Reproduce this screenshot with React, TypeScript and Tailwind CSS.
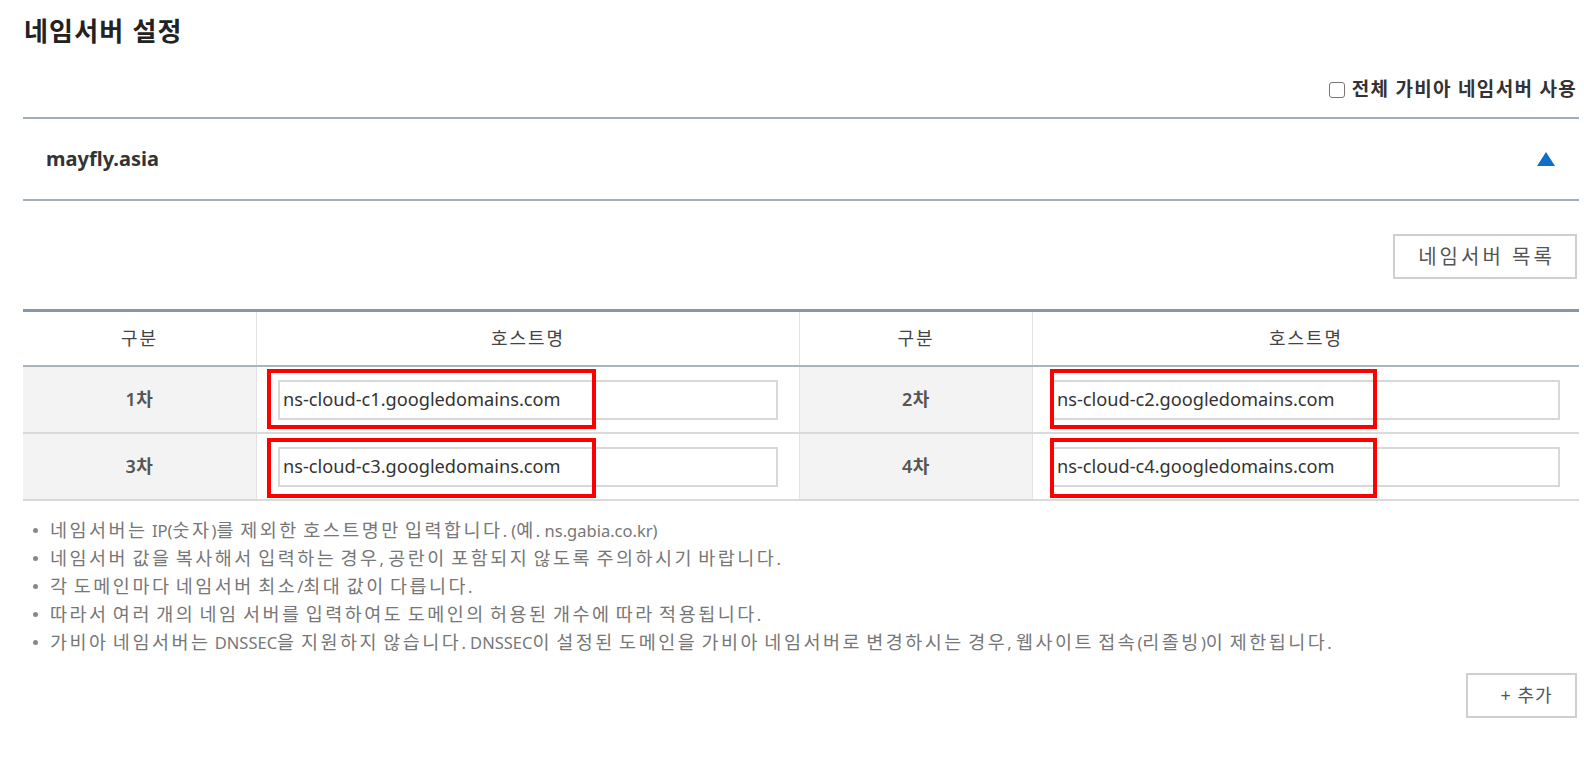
import React from "react";

const FONT = { fontFamily: '"Noto Sans", "Noto Sans CJK KR", sans-serif' };

function NoteText({ text }: { text: string }) {
  const parts = text.split(/([\uAC00-\uD7A3]+)/);
  return (
    <span>
      {parts.map((p, i) =>
        /[\uAC00-\uD7A3]/.test(p) ? (
          <span key={i} className="text-[18.5px] tracking-[2.5px]">
            {p}
          </span>
        ) : (
          <span key={i} className="text-[16.5px]">
            {p}
          </span>
        )
      )}
    </span>
  );
}

function Row({ a, b, c, d, first }: { a: string; b: string; c: string; d: string; first: boolean }) {
  return (
    <div className="flex h-[67px] border-b-2 border-[#dadada]">
      <div className="w-[234px] shrink-0 bg-[#f3f3f3] border-r border-[#e3e3e3] flex items-center justify-center text-[18px] tracking-[0.5px] font-semibold text-[#555]">
        {a}
      </div>
      <div className="relative w-[543px] shrink-0 border-r border-[#e3e3e3] flex items-center px-[21px]">
        <div className="w-full h-[40px] border-2 border-[#d8d8d8] flex items-center pl-[3px] text-[18.2px] text-[#333]">
          {b}
        </div>
        <div className={`absolute left-[10px] w-[329px] h-[60px] border-[4px] border-[#ff0000] ${first ? "top-[2px]" : "top-[4px]"}`} />
      </div>
      <div className="w-[233px] shrink-0 bg-[#f3f3f3] border-r border-[#e3e3e3] flex items-center justify-center text-[18px] tracking-[0.5px] font-semibold text-[#555]">
        {c}
      </div>
      <div className="relative flex-1 flex items-center pl-[19px] pr-[19px]">
        <div className="w-full h-[40px] border-2 border-[#d8d8d8] flex items-center pl-[3px] text-[18.2px] text-[#333]">
          {d}
        </div>
        <div className={`absolute left-[17px] w-[327px] h-[60px] border-[4px] border-[#ff0000] ${first ? "top-[2px]" : "top-[4px]"}`} />
      </div>
    </div>
  );
}

const notes = [
  "네임서버는 IP(숫자)를 제외한 호스트명만 입력합니다. (예. ns.gabia.co.kr)",
  "네임서버 값을 복사해서 입력하는 경우, 공란이 포함되지 않도록 주의하시기 바랍니다.",
  "각 도메인마다 네임서버 최소/최대 값이 다릅니다.",
  "따라서 여러 개의 네임 서버를 입력하여도 도메인의 허용된 개수에 따라 적용됩니다.",
  "가비아 네임서버는 DNSSEC을 지원하지 않습니다. DNSSEC이 설정된 도메인을 가비아 네임서버로 변경하시는 경우, 웹사이트 접속(리졸빙)이 제한됩니다.",
];

export default function App() {
  return (
    <div className="w-[1584px] min-h-[767px] bg-white pl-[23px] pr-[5px]" style={FONT}>
      <div className="h-[62px] flex items-center pl-[1px]">
        <h1 className="text-[26px] tracking-[1.2px] font-bold text-[#222] leading-none">네임서버 설정</h1>
      </div>
      <div className="h-[55px] flex items-center justify-end pr-[2px]">
        <label className="flex items-center gap-[7px] text-[19px] tracking-[1.3px] font-bold text-[#333]">
          <span className="w-[16px] h-[16px] border-[1.5px] border-[#777] rounded-[3px] bg-white" />
          전체 가비아 네임서버 사용
        </label>
      </div>
      <div className="h-[2px] bg-[#a3aebb]" />
      <div className="h-[80px] flex items-center justify-between pl-[23px] pr-[24px]">
        <span className="text-[20px] font-bold text-[#333]">mayfly.asia</span>
        <svg width="18" height="14" viewBox="0 0 18 14">
          <polygon points="9,0 18,14 0,14" fill="#0f6fc6" />
        </svg>
      </div>
      <div className="h-[2px] bg-[#a3aebb]" />
      <div className="flex justify-end pt-[33px] pr-[2px]">
        <button className="w-[184px] h-[45px] border-2 border-[#cfcfcf] bg-white text-[20px] tracking-[3px] pl-[3px] text-[#555]">
          네임서버 목록
        </button>
      </div>
      <div className="mt-[30px] border-t-[3px] border-[#8796a8]">
        <div className="flex h-[55px] border-b-2 border-[#a9b4c0]">
          <div className="w-[234px] shrink-0 border-r border-[#e3e3e3] flex items-center justify-center text-[18px] tracking-[2px] text-[#444]">구분</div>
          <div className="w-[543px] shrink-0 border-r border-[#e3e3e3] flex items-center justify-center text-[18px] tracking-[2px] text-[#444]">호스트명</div>
          <div className="w-[233px] shrink-0 border-r border-[#e3e3e3] flex items-center justify-center text-[18px] tracking-[2px] text-[#444]">구분</div>
          <div className="flex-1 flex items-center justify-center text-[18px] tracking-[2px] text-[#444]">호스트명</div>
        </div>
        <Row a="1차" b="ns-cloud-c1.googledomains.com" c="2차" d="ns-cloud-c2.googledomains.com" first={true} />
        <Row a="3차" b="ns-cloud-c3.googledomains.com" c="4차" d="ns-cloud-c4.googledomains.com" first={false} />
      </div>
      <ul className="mt-[15px] flex flex-col">
        {notes.map((n) => (
          <li key={n} className="h-[28px] flex items-center text-[#777]">
            <span className="w-[5px] h-[5px] rounded-full bg-[#888] ml-[10px] mr-[12px] shrink-0" />
            <NoteText text={n} />
          </li>
        ))}
      </ul>
      <div className="flex justify-end pt-[17px] pr-[2px]">
        <button className="w-[111px] h-[45px] border-2 border-[#cfcfcf] bg-white pl-[10px] text-[18px] tracking-[1px] text-[#555]">
          + 추가
        </button>
      </div>
    </div>
  );
}
